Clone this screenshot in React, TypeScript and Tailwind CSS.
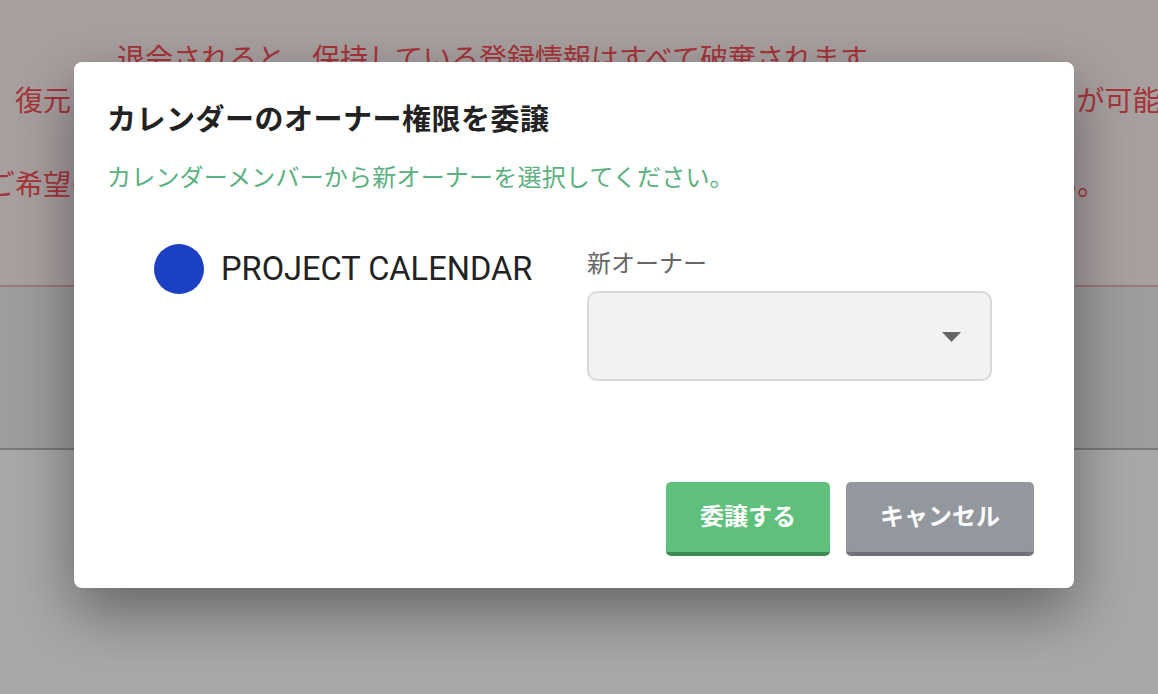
import { useState } from 'react';

// Background page (withdrawal notice) under the transfer dialog
const notice = {
  first: '退会されると、保持している登録情報はすべて破棄されます。',
  second: '復元はできません。退会後も同じメールアドレスで、再度新規にご登録いただくことが可能です。',
  third: 'ご希望の方は、下記の注意事項をご確認のうえ、退会手続きのボタンを押してください。',
};

export default function App() {
  const [newOwner, setNewOwner] = useState<string>('');

  return (
    <div className="relative h-[694px] w-[1158px] overflow-hidden bg-white font-['Roboto','Noto_Sans_CJK_JP',sans-serif]">
      {/* page behind the overlay */}
      <div className="h-[287px] border-b-2 border-[#eab7bd] bg-[#fff1f1] pt-[39px] text-[28px] leading-[42px] text-[#fb5059] whitespace-nowrap">
        <p className="ml-[117px]">{notice.first}</p>
        <p className="ml-[15px]">{notice.second}</p>
        <p className="-ml-[13px] mt-[42px]">{notice.third}</p>
      </div>
      <div className="h-[163px] border-b-2 border-[#b9b9b9] bg-[#efefef]" />

      {/* overlay + dialog */}
      <div className="absolute inset-0 bg-black/[0.34] pl-[74px] pt-[62px]">
        <div className="flex h-[526px] w-[1000px] flex-col rounded-lg bg-white pl-[33px] pr-[40px] pt-[38px] shadow-[0_24px_60px_rgba(0,0,0,0.4)]">
          <h2 className="text-[29px] font-bold leading-[40px] tracking-[0.5px] text-[#222]">
            カレンダーのオーナー権限を委譲
          </h2>
          <p className="mt-[18px] text-[24px] leading-[40px] tracking-[0.2px] text-[#5bb07f]">
            カレンダーメンバーから新オーナーを選択してください。
          </p>

          <div className="mt-[46px] flex">
            <div className="flex w-[480px] items-start pl-[47px]">
              <div className="flex h-[50px] items-center gap-[17px]">
                <span className="h-[50px] w-[50px] rounded-full bg-[#1b40c4]" />
                <span className="text-[32.6px] leading-[40px] text-[#222]">PROJECT CALENDAR</span>
              </div>
            </div>
            <div className="flex flex-col">
              <label className="mt-[4px] text-[24px] leading-[32px] text-[#666]">新オーナー</label>
              <div className="relative mt-[11px]">
                <select
                  value={newOwner}
                  onChange={(e) => setNewOwner(e.target.value)}
                  className="h-[90px] w-[405px] appearance-none rounded-[10px] border-2 border-[#d9d9d9] bg-[#f2f2f2] px-4 text-[22px] text-[#333] outline-none"
                >
                  <option value=""></option>
                </select>
                <svg
                  className="pointer-events-none absolute right-[31px] top-[41px]"
                  width="19"
                  height="10"
                  viewBox="0 0 19 10"
                >
                  <path d="M0 0 H19 L9.5 10 Z" fill="#666" />
                </svg>
              </div>
            </div>
          </div>

          <div className="mt-[101px] flex justify-end gap-4">
            <button className="h-[74px] w-[164px] rounded-[5px] border-b-4 border-[#3e8b50] bg-[#5ec07a] text-[24px] font-bold text-white">
              委譲する
            </button>
            <button className="h-[74px] w-[188px] rounded-[5px] border-b-4 border-[#6f7377] bg-[#92989e] text-[24px] font-bold text-white">
              キャンセル
            </button>
          </div>
        </div>
      </div>
    </div>
  );
}
